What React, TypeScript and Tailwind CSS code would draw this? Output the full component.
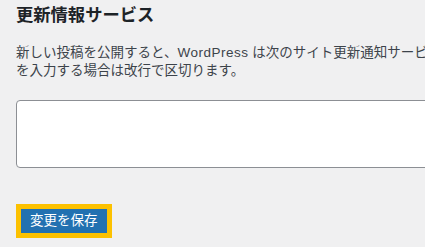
import React from 'react';

const font = { fontFamily: '"Liberation Sans", "Noto Sans CJK JP", sans-serif' };

export default function App() {
  return (
    <div className="h-[247px] w-[425px] overflow-hidden bg-[#f0f0f1] pl-4 text-[#1d2327]" style={font}>
      <h2 className="pt-[5px] text-[17.3px] font-semibold leading-[20px] whitespace-nowrap">更新情報サービス</h2>

      <div className="mt-[19px] text-[13.5px] leading-[18px] text-[#3c434a] whitespace-nowrap">
        <p>
          新しい投稿を公開すると、<span className="tracking-[0.5px]">WordPress</span> は次のサイト更新通知サービ
        </p>
        <p>を入力する場合は改行で区切ります。</p>
      </div>

      <textarea
        aria-label="更新情報サービス"
        className="mt-[20px] block h-[68px] w-[600px] resize-none rounded-[4px] border border-[#8c8f94] bg-white"
      />

      <div className="mt-[36px] inline-flex border-[5px] border-[#fcc100]">
        <button
          type="button"
          className="h-6 bg-[#2271b1] px-[9px] text-[13.5px] leading-6 text-white"
        >
          変更を保存
        </button>
      </div>
    </div>
  );
}
